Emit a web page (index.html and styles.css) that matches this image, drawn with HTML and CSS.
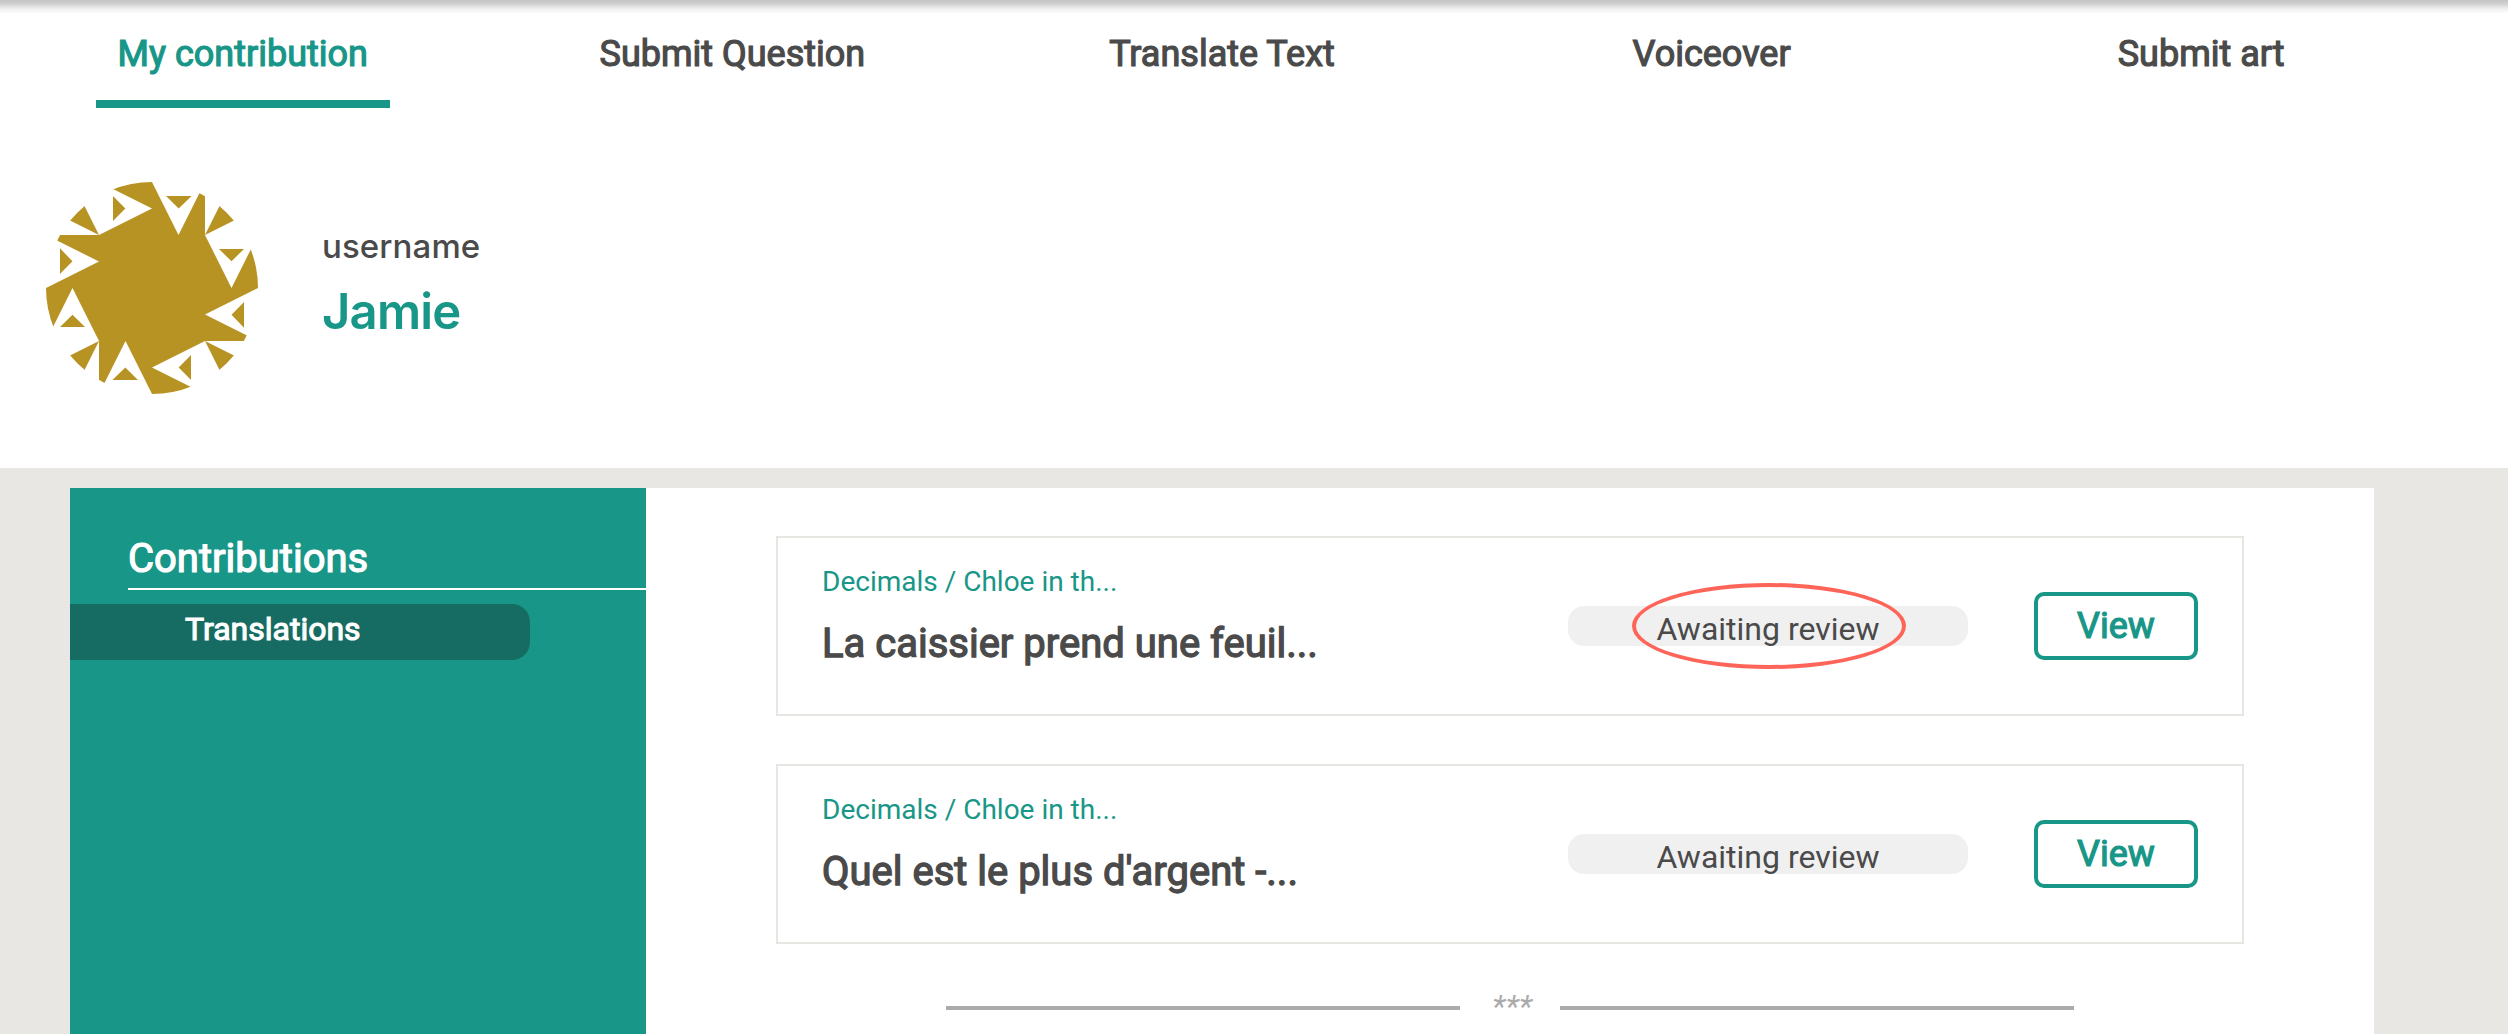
FILE: index.html
```html
<!DOCTYPE html>
<html lang="en">
<head>
<meta charset="utf-8">
<title>My contribution</title>
<link rel="stylesheet" href="styles.css">
</head>
<body>
<header class="top">
  <nav class="tabs">
    <a class="tab tab-active">My contribution</a>
    <a class="tab">Submit Question</a>
    <a class="tab">Translate Text</a>
    <a class="tab">Voiceover</a>
    <a class="tab">Submit art</a>
  </nav>
  <section class="profile">
    <svg class="avatar" viewBox="0 0 636 636" fill="#b79324">
      <defs>
        <clipPath id="round"><circle cx="318" cy="318" r="318"/></clipPath>
        <path id="quarter" d="M159 0H318L397.500 159 477 0V159L318 318 159 159 318 79.500ZM201 42V117L238 79.500ZM360 42H437L398 79.500ZM477 159 556.500 0H636V79.500Z"/>
      </defs>
      <g clip-path="url(#round)">
        <use href="#quarter"/>
        <use href="#quarter" transform="rotate(90 318 318)"/>
        <use href="#quarter" transform="rotate(180 318 318)"/>
        <use href="#quarter" transform="rotate(270 318 318)"/>
        <rect x="159" y="159" width="318" height="318"/>
      </g>
    </svg>
    <div class="who">
      <div class="who-label">username</div>
      <div class="who-name">Jamie</div>
    </div>
  </section>
</header>
<main class="panel">
  <aside class="sidebar">
    <h2 class="side-title">Contributions</h2>
    <a class="side-item">Translations</a>
  </aside>
  <section class="list">
    <article class="card">
      <div class="card-text">
        <div class="crumb">Decimals / Chloe in th...</div>
        <div class="title">La caissier prend une feuil...</div>
      </div>
      <div class="badge">Awaiting review<i class="ring"></i></div>
      <button class="view">View</button>
    </article>
    <article class="card">
      <div class="card-text">
        <div class="crumb">Decimals / Chloe in th...</div>
        <div class="title">Quel est le plus d'argent -...</div>
      </div>
      <div class="badge">Awaiting review</div>
      <button class="view">View</button>
    </article>
    <div class="end"><hr><em>***</em><hr></div>
  </section>
</main>
</body>
</html>
```
FILE: styles.css
```css
* { box-sizing: border-box; }
body {
  margin: 0;
  height: 1034px;
  overflow: hidden;
  background: #e8e7e3;
  color: #4a4a4a;
  font-family: Roboto, "Liberation Sans", sans-serif;
}
.top {
  height: 468px;
  background: linear-gradient(#c4c4c4 0, #d2d2d2 4px, #f0f0f0 9px, #fff 14px) #fff;
}
.tabs {
  display: grid;
  grid-template-columns: repeat(5, 1fr);
  width: 2448px;
  margin-left: -2px;
  height: 108px;
}
.tab {
  justify-self: center;
  width: 60%;
  height: 108px;
  padding-top: 33px;
  text-align: center;
  font-size: 36px;
  line-height: 42px;
  white-space: nowrap;
  -webkit-text-stroke: 1.2px currentColor;
}
.tab-active { color: #189688; border-bottom: 8px solid #189688; }
.profile {
  display: flex;
  gap: 64px;
  padding: 74px 0 0 46px;
}
.avatar { width: 212px; height: 212px; }
.who { padding-top: 42px; font-family: Inter, sans-serif; }
.who-label {
  font-size: 33px;
  line-height: 44px;
  font-weight: 500;
  letter-spacing: 0.1px;
}
.who-name {
  margin-top: 14px;
  color: #189688;
  font-size: 49px;
  line-height: 60px;
  font-weight: 600;
  letter-spacing: -0.8px;
}
.panel {
  display: flex;
  width: 2304px;
  height: 546px;
  margin: 20px 0 0 70px;
  background: #fff;
}
.sidebar {
  width: 576px;
  padding-top: 46px;
  background: #189688;
  color: #fff;
}
.side-title {
  margin: 0 0 14px 58px;
  height: 56px;
  border-bottom: 2px solid #fff;
  font-size: 40px;
  font-weight: 400;
  line-height: 50px;
  -webkit-text-stroke: 1.2px currentColor;
}
.side-item {
  display: block;
  width: 460px;
  height: 56px;
  padding-left: 115px;
  border-radius: 0 18px 18px 0;
  background: #166c62;
  font-size: 32px;
  line-height: 50px;
  -webkit-text-stroke: 1.1px currentColor;
}
.list { flex: 1; padding: 48px 130px 0; }
.card {
  display: flex;
  align-items: center;
  height: 180px;
  margin-bottom: 48px;
  padding: 0 44px;
  border: 2px solid #e7e7e1;
}
.card-text { align-self: stretch; flex: 1; padding-top: 26px; white-space: nowrap; }
.crumb { color: #189688; font-size: 28px; line-height: 36px; }
.title {
  margin-top: 19px;
  font-size: 40px;
  line-height: 50px;
  -webkit-text-stroke: 1.3px currentColor;
}
.badge {
  position: relative;
  width: 400px;
  height: 40px;
  border-radius: 16px;
  background: #f0f0f0;
  text-align: center;
  font-size: 32px;
  line-height: 46px;
}
.ring {
  position: absolute;
  left: 64px;
  top: -23px;
  width: 274px;
  height: 86px;
  border: 4px solid #ff6459;
  border-radius: 50%;
}
.view {
  width: 164px;
  height: 68px;
  margin-left: 66px;
  padding: 0;
  border: 4px solid #189688;
  border-radius: 10px;
  background: #fff;
  color: #189688;
  font: 36px/60px Roboto, sans-serif;
  -webkit-text-stroke: 1.2px currentColor;
}
.end {
  display: flex;
  justify-content: center;
  gap: 32px;
  height: 40px;
  color: #ababab;
}
.end hr { width: 514px; height: 4px; margin: 14px 0 0; border: 0; background: #ababab; }
.end em { width: 36px; font-size: 32px; line-height: 28px; }
```
